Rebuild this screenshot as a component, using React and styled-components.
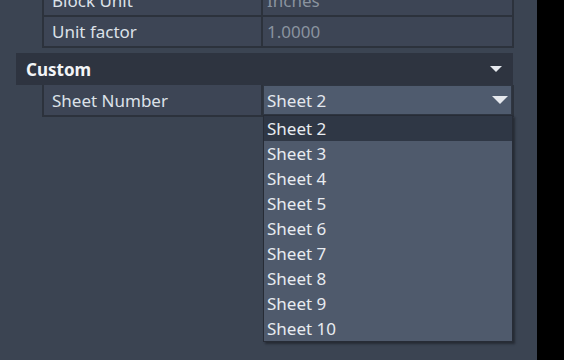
import React from "react";
import styled, { createGlobalStyle } from "styled-components";

const Global = createGlobalStyle`
  html, body { margin: 0; padding: 0; background: #3b4452; }
  body { font-family: "Noto Sans", "Open Sans", sans-serif; }
  * { box-sizing: border-box; }
`;

const Page = styled.div`
  display: flex;
  width: 564px;
  height: 360px;
  overflow: hidden;
`;

const Panel = styled.div`
  flex: 1;
  background: #3b4452;
  padding: 0 23px 0 16px;
  display: flex;
  flex-direction: column;
`;

const Strip = styled.div`
  width: 27px;
  background: #000;
`;

const Grid = styled.div`
  display: grid;
  grid-template-columns: 217px 1fr;
  gap: 2px;
  padding: ${(p) => (p.$flushTop ? "0 2px 2px" : "2px")};
  margin: ${(p) => p.$margin || "0"};
  margin-left: 26px;
  background: #2c323c;
`;

const Cell = styled.div`
  height: ${(p) => p.$h || 29}px;
  background: #3d4555;
  display: flex;
  align-items: center;
  padding-left: ${(p) => (p.$value ? 4 : 8)}px;
  font-size: 17px;
  color: ${(p) => (p.$muted ? "#8a939f" : "#dce1e8")};
  white-space: nowrap;
  overflow: hidden;
  position: relative;
`;

const SectionHeader = styled.div`
  height: 32px;
  margin-right: 1px;
  background: #2e3440;
  display: flex;
  align-items: center;
  justify-content: space-between;
  padding: 0 11px 0 10px;
  font-size: 17px;
  font-weight: 700;
  color: #f2f4f7;
`;

const Arrow = styled.span`
  width: 0;
  height: 0;
  border-left: ${(p) => p.$w / 2}px solid transparent;
  border-right: ${(p) => p.$w / 2}px solid transparent;
  border-top: ${(p) => p.$w / 2}px solid #e6e9ee;
`;

const SelectCell = styled.div`
  height: 30px;
  position: relative;
`;

const SelectBox = styled.div`
  height: 100%;
  border: 1px solid #2f3642;
  background: #4f5b6e;
  display: flex;
  align-items: center;
  justify-content: space-between;
  padding: 0 3px 0 3px;
  font-size: 17px;
  color: #e4e8ee;
`;

const List = styled.div`
  position: absolute;
  top: 100%;
  left: 0;
  width: 250px;
  background: #4f5a6c;
  border: 1px solid #272c36;
  box-shadow: 2px 2px 2px rgba(20, 24, 30, 0.55);
  z-index: 2;
`;

const Item = styled.div`
  height: 25px;
  line-height: 25px;
  padding-left: 3px;
  font-size: 17px;
  color: #e8ebf0;
  background: ${(p) => (p.$selected ? "#2f3745" : "transparent")};
`;

const sheets = ["Sheet 2", "Sheet 3", "Sheet 4", "Sheet 5", "Sheet 6", "Sheet 7", "Sheet 8", "Sheet 9", "Sheet 10"];

export default function App() {
  return (
    <>
      <Global />
      <Page>
        <Panel>
          <Grid $margin="-16px 0 5px">
            <Cell>Block Unit</Cell>
            <Cell $value $muted>Inches</Cell>
            <Cell>Unit factor</Cell>
            <Cell $value $muted>1.0000</Cell>
          </Grid>
          <SectionHeader>
            <span>Custom</span>
            <Arrow $w={12} />
          </SectionHeader>
          <Grid $flushTop>
            <Cell $h={30}>Sheet Number</Cell>
            <SelectCell>
              <SelectBox>
                <span>Sheet 2</span>
                <Arrow $w={16} />
              </SelectBox>
              <List>
                {sheets.map((s, i) => (
                  <Item key={s} $selected={i === 0}>{s}</Item>
                ))}
              </List>
            </SelectCell>
          </Grid>
        </Panel>
        <Strip />
      </Page>
    </>
  );
}
